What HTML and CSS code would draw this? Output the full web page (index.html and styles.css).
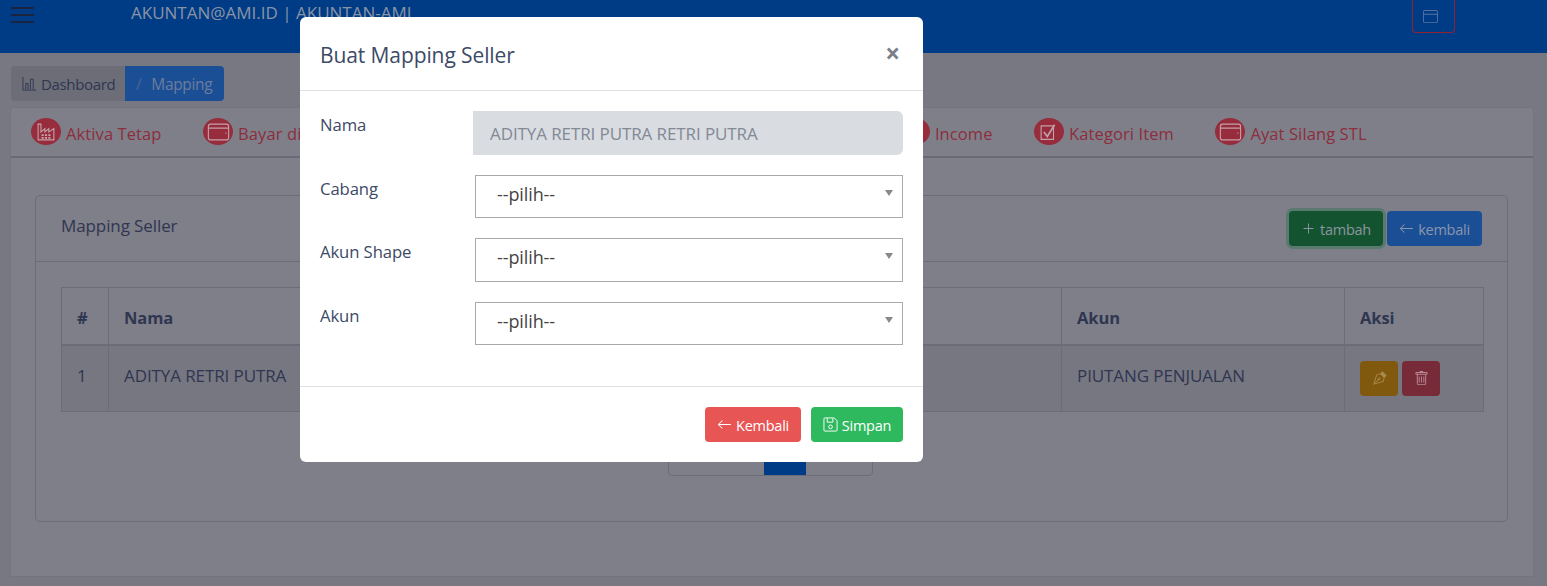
FILE: index.html
```html
<!DOCTYPE html>
<html lang="id">
  <head>
    <meta charset="UTF-8" />
    <title>Mapping Seller</title>
    <meta name="viewport" content="width=device-width, initial-scale=1.0" />
    <link rel="stylesheet" href="styles.css">
  </head>
  <body>
    <header class="topbar">
      <div class="burger"><span></span><span></span><span></span></div>
      <div class="account">AKUNTAN@AMI.ID | AKUNTAN-AMI</div>
      <button class="window-btn">
        <svg viewBox="0 0 16 16"><path fill-rule="evenodd" d="M2 1a2 2 0 0 0-2 2v10a2 2 0 0 0 2 2h12a2 2 0 0 0 2-2V3a2 2 0 0 0-2-2H2zm13 2v2H1V3a1 1 0 0 1 1-1h12a1 1 0 0 1 1 1zM2 14a1 1 0 0 1-1-1V6h14v7a1 1 0 0 1-1 1H2z"/></svg>
      </button>
    </header>

    <nav class="crumbs">
      <a class="crumb">
        <svg viewBox="0 0 16 16"><path d="M1 1v14h14M4 8h2.500v6M4 14V8M9 3.500h3V14M9 14V3.500" fill="none" stroke="currentColor"/></svg>
        Dashboard
      </a>
      <a class="crumb active"><i>/</i> Mapping</a>
    </nav>

    <main class="panel">
      <ul class="tabs">
        <li class="tab">
          <span class="tab-icon"><svg viewBox="0 0 16 16"><path d="M1 15V1h2.500v7L7 5v3l3.500-3v3L15 5v10z" fill="none" stroke="currentColor"/><path d="M4 10h2v1.500H4zm3 0h2v1.500H7zm3 0h2v1.500h-2zM4 12.500h2V14H4zm3 0h2V14H7zm3 0h2V14h-2z"/></svg></span>Aktiva Tetap
        </li>
        <li class="tab">
          <span class="tab-icon tab-icon-wide"><svg viewBox="0 0 20 16"><path d="M3 1h14a2 2 0 0 1 2 2v10a2 2 0 0 1-2 2H3a2 2 0 0 1-2-2V3a2 2 0 0 1 2-2zM1.500 4.500h17" fill="none" stroke="currentColor"/><path d="M16 8.500h1v1h-1z"/></svg></span>Bayar di
        </li>
        <li class="tab tab-income"><span class="tab-icon"></span>Income</li>
        <li class="tab">
          <span class="tab-icon"><svg viewBox="0 0 16 16"><path d="M1 2.500h11v12H1z" fill="none" stroke="currentColor"/><path d="M3.500 8 6.500 12 13 1.500" fill="none" stroke="currentColor" stroke-width="1.500"/></svg></span>Kategori Item
        </li>
        <li class="tab">
          <span class="tab-icon tab-icon-wide"><svg viewBox="0 0 20 16"><path d="M3 1h14a2 2 0 0 1 2 2v10a2 2 0 0 1-2 2H3a2 2 0 0 1-2-2V3a2 2 0 0 1 2-2zM1.500 4.500h17" fill="none" stroke="currentColor"/><path d="M16 8.500h1v1h-1z"/></svg></span>Ayat Silang STL
        </li>
      </ul>

      <section class="card">
        <div class="card-head">
          <span class="card-title">Mapping Seller</span>
          <div class="card-actions">
            <button class="btn btn-green">
              <svg viewBox="0 0 16 16"><path d="M8 2.500a.5.5 0 0 1 .5.500v4.500H13a.5.5 0 0 1 0 1H8.500V13a.5.5 0 0 1-1 0V8.500H3a.5.5 0 0 1 0-1h4.500V3a.5.5 0 0 1 .5-.5z"/></svg>
              tambah
            </button>
            <button class="btn btn-blue">
              <svg viewBox="0 0 16 16"><path d="M15 8a.5.5 0 0 0-.5-.5H2.700l3.150-3.150a.5.5 0 1 0-.7-.7l-4 4a.5.5 0 0 0 0 .7l4 4a.5.5 0 0 0 .7-.7L2.700 8.500H14.500A.5.5 0 0 0 15 8z"/></svg>
              kembali
            </button>
          </div>
        </div>
        <div class="card-body">
          <table class="grid">
            <thead>
              <tr>
                <th class="col-no">#</th>
                <th>Nama</th>
                <th class="col-akun">Akun</th>
                <th class="col-aksi">Aksi</th>
              </tr>
            </thead>
            <tbody>
              <tr>
                <td>1</td>
                <td>ADITYA RETRI PUTRA</td>
                <td>PIUTANG PENJUALAN</td>
                <td>
                  <div class="row-actions">
                    <button class="mini mini-yellow">
                      <svg viewBox="0 0 16 16"><path fill-rule="evenodd" d="M10.646.646a.5.5 0 0 1 .708 0l4 4a.5.5 0 0 1 0 .708l-1.902 1.902-.829 3.313a1.500 1.500 0 0 1-1.024 1.073L1.254 14.746 4.358 4.400A1.500 1.500 0 0 1 5.430 3.377l3.313-.828L10.646.646zm-1.800 2.908-3.173.793a.5.5 0 0 0-.358.342l-2.570 8.565 8.567-2.570a.5.5 0 0 0 .34-.357l.794-3.174-3.600-3.600z"/><path fill-rule="evenodd" d="M2.832 13.228 8 9a1 1 0 1 0-1-1l-4.228 5.168-.026.086.086-.026z"/></svg>
                    </button>
                    <button class="mini mini-red">
                      <svg viewBox="0 0 16 16"><path d="M5.500 5.500A.5.5 0 0 1 6 6v6a.5.5 0 0 1-1 0V6a.5.5 0 0 1 .5-.5zm2.500 0a.5.5 0 0 1 .5.500v6a.5.5 0 0 1-1 0V6a.5.5 0 0 1 .5-.5zm3 .5a.5.5 0 0 0-1 0v6a.5.5 0 0 0 1 0V6z"/><path fill-rule="evenodd" d="M14.500 3a1 1 0 0 1-1 1H13v9a2 2 0 0 1-2 2H5a2 2 0 0 1-2-2V4h-.5a1 1 0 0 1-1-1V2a1 1 0 0 1 1-1H6a1 1 0 0 1 1-1h2a1 1 0 0 1 1 1h3.500a1 1 0 0 1 1 1v1zM4.118 4 4 4.059V13a1 1 0 0 0 1 1h6a1 1 0 0 0 1-1V4.059L11.882 4H4.118zM2.500 3V2h11v1h-11z"/></svg>
                    </button>
                  </div>
                </td>
              </tr>
            </tbody>
          </table>
          <div class="pager">
            <span class="page page-first"></span>
            <span class="page current"></span>
            <span class="page"></span>
          </div>
        </div>
      </section>
    </main>

    <div class="modal">
      <div class="modal-head">
        <h5>Buat Mapping Seller</h5>
        <span class="close">&times;</span>
      </div>
      <form class="modal-body">
        <div class="field">
          <label>Nama</label>
          <input class="readonly" type="text" value="ADITYA RETRI PUTRA RETRI PUTRA" disabled />
        </div>
        <div class="field">
          <label>Cabang</label>
          <div class="select">--pilih--</div>
        </div>
        <div class="field">
          <label>Akun Shape</label>
          <div class="select">--pilih--</div>
        </div>
        <div class="field">
          <label>Akun</label>
          <div class="select">--pilih--</div>
        </div>
      </form>
      <div class="modal-foot">
        <button class="btn btn-danger">
          <svg viewBox="0 0 16 16"><path d="M15 8a.5.5 0 0 0-.5-.5H2.700l3.150-3.150a.5.5 0 1 0-.7-.7l-4 4a.5.5 0 0 0 0 .7l4 4a.5.5 0 0 0 .7-.7L2.700 8.500H14.500A.5.5 0 0 0 15 8z"/></svg>
          Kembali
        </button>
        <button class="btn btn-success">
          <svg viewBox="0 0 16 16"><path d="M2 1h10l3 3v10a1 1 0 0 1-1 1H2a1 1 0 0 1-1-1V2a1 1 0 0 1 1-1z" fill="none" stroke="currentColor"/><path d="M4.500 1.500v4h6v-4" fill="none" stroke="currentColor"/><circle cx="8" cy="10.500" r="2" fill="none" stroke="currentColor"/></svg>
          Simpan
        </button>
      </div>
    </div>
  </body>
</html>
```

FILE: styles.css
```css
* {
  box-sizing: border-box;
}

html,
body {
  height: 586px;
  overflow: hidden;
}

body {
  margin: 0;
  font-family: "Open Sans", "Noto Sans", sans-serif;
  font-size: 15px;
  letter-spacing: -0.1px;
  color: #2f3650;
  background-color: #787882;
}

svg {
  width: 1em;
  height: 1em;
  fill: currentColor;
  flex: none;
}

button {
  font-family: inherit;
  letter-spacing: inherit;
  border: none;
  cursor: pointer;
}

.topbar {
  display: flex;
  height: 53px;
  padding-left: 11px;
  background-color: #003c85;
}

.burger {
  display: flex;
  flex-direction: column;
  gap: 5px;
  width: 23px;
  margin-top: 7px;
}

.burger span {
  height: 2px;
  background-color: #182440;
}

.account {
  margin-left: 97px;
  font-size: 17px;
  letter-spacing: 0;
  line-height: 25px;
  color: #8a93a6;
}

.window-btn {
  display: flex;
  width: 43px;
  height: 33px;
  margin-left: auto;
  margin-right: 92px;
  padding: 9px 0 0 10px;
  font-size: 15px;
  color: #55709f;
  background: none;
  border: 1px solid #8f2430;
  border-top: none;
  border-radius: 0 0 4px 4px;
}

.crumbs {
  display: flex;
  width: 213px;
  height: 35px;
  margin: 13px 0 6px 11px;
  letter-spacing: -0.35px;
  border-radius: 4px;
  overflow: hidden;
}

.crumb {
  display: flex;
  align-items: center;
  gap: 4px;
  width: 114px;
  padding-left: 11px;
  background-color: #6d6d78;
  color: #2f3650;
}

.crumb svg {
  font-size: 15px;
}

.crumb.active {
  width: 99px;
  gap: 10px;
  font-size: 15.500px;
  background-color: #1a4f96;
  color: #6d7c9c;
}

.crumb.active i {
  font-style: normal;
  color: #4a6590;
}

.panel {
  width: 1524px;
  height: 470px;
  margin-left: 10px;
  background-color: #7f7f8a;
  border: 1px solid #74747f;
  border-radius: 4px 4px 0 0;
}

.tabs {
  display: flex;
  gap: 41.500px;
  height: 50px;
  margin: 0;
  padding: 10px 0 0 20px;
  list-style: none;
  border-bottom: 2px solid #6a6a76;
  font-size: 16.500px;
  letter-spacing: 0.1px;
  color: #8c2e3c;
}

.tab {
  display: flex;
  align-items: center;
  gap: 5px;
  height: 31px;
}

.tab-income {
  margin-left: 557px;
}

.tab-icon {
  display: flex;
  align-items: center;
  justify-content: center;
  align-self: flex-start;
  width: 30px;
  height: 27px;
  font-size: 18px;
  color: #c4a0a8;
  background-color: #962c3c;
  border-radius: 50%;
}

.tab-icon-wide svg {
  width: 23px;
  height: 18px;
}

.card {
  width: 1473px;
  height: 327px;
  margin: 37px 0 0 24px;
  border: 1px solid #6c6c78;
  border-radius: 5px;
}

.card-head {
  display: flex;
  justify-content: space-between;
  height: 66px;
  padding: 15px 25px 0 25px;
  border-bottom: 1px solid #6c6c78;
}

.card-title {
  font-size: 17px;
  line-height: 30px;
}

.card-actions {
  display: flex;
  gap: 4px;
  height: 35px;
}

.btn {
  display: flex;
  align-items: center;
  justify-content: center;
  gap: 4px;
  height: 35px;
  padding-top: 2px;
  font-size: 14.500px;
  letter-spacing: -0.25px;
  border-radius: 4px;
}

.btn svg {
  font-size: 15px;
  margin-top: -2px;
}

.btn-green {
  width: 94px;
  color: #8a96a0;
  background-color: #145330;
  box-shadow: 0 0 0 3px #5a7a70;
}

.btn-blue {
  width: 95px;
  color: #8a95ab;
  background-color: #1a4f96;
}

.card-body {
  padding: 25px 24px 0 25px;
}

.grid {
  width: 1423px;
  table-layout: fixed;
  border-collapse: collapse;
}

.grid th,
.grid td {
  padding: 0 15px;
  text-align: left;
  border: 1px solid #6c6c78;
}

.grid th {
  height: 57px;
  padding-top: 3px;
  font-size: 16.500px;
  font-weight: 700;
  border-bottom-width: 2px;
}

.grid td {
  height: 67px;
  padding-bottom: 6px;
  font-size: 17px;
  color: #2f3650;
  background-color: #777782;
}

.col-no {
  width: 47px;
}

.col-akun {
  width: 283px;
}

.col-aksi {
  width: 139px;
}

.row-actions {
  display: flex;
  gap: 4px;
  padding-top: 7px;
}

.mini {
  display: flex;
  align-items: center;
  justify-content: center;
  width: 38px;
  height: 35px;
  padding: 0;
  font-size: 15px;
  border-radius: 4px;
}

.mini-yellow {
  color: #a88a4a;
  background-color: #80590f;
}

.mini-red {
  color: #b98a95;
  background-color: #772a38;
}

.pager {
  display: flex;
  width: 205px;
  height: 64px;
  margin: 0 0 0 607px;
  border: 1px solid #6c6c78;
  border-radius: 0 0 4px 4px;
}

.page {
  flex: 1;
}

.page-first {
  flex: none;
  width: 95px;
}

.page.current {
  flex: none;
  width: 42px;
  background-color: #003c85;
}

.modal {
  position: fixed;
  top: 17px;
  left: 300px;
  width: 623px;
  height: 445px;
  color: #3c4a66;
  background-color: #fff;
  border-radius: 6px;
}

.modal-head {
  display: flex;
  justify-content: space-between;
  height: 74px;
  padding: 21px 23px 0 20px;
  border-bottom: 1px solid #dee2e6;
}

.modal-head h5 {
  margin: 0;
  font-size: 21px;
  font-weight: 400;
  line-height: 34px;
}

.close {
  font-size: 26px;
  font-weight: 700;
  line-height: 30px;
  color: #7a7f8a;
}

.modal-body {
  display: flex;
  flex-direction: column;
  height: 296px;
  padding: 20px 20px 0 20px;
  border-bottom: 1px solid #dee2e6;
}

.field {
  display: flex;
  align-items: flex-start;
  flex: none;
  height: 63.500px;
  font-size: 16.700px;
}

.field label {
  width: 155px;
  line-height: 28px;
}

.readonly {
  width: 430px;
  height: 44px;
  margin-left: -2px;
  padding: 0 17px;
  font-family: inherit;
  font-size: 17px;
  letter-spacing: inherit;
  color: #838995;
  background-color: #d9dce1;
  border: none;
  border-radius: 0 6px 6px 0;
}

.select {
  position: relative;
  width: 428px;
  height: 43.700px;
  padding-left: 21px;
  font-size: 18px;
  line-height: 37px;
  color: #444;
  border: 1px solid #aaa;
}

.select::after {
  content: "";
  position: absolute;
  top: 14px;
  right: 9px;
  border-top: 6px solid #888;
  border-left: 4.500px solid transparent;
  border-right: 4.500px solid transparent;
}

.modal-foot {
  display: flex;
  justify-content: flex-end;
  gap: 10px;
  padding: 20px 20px 0 0;
}

.btn-danger {
  width: 96px;
  color: #fff;
  background-color: #e85555;
}

.btn-success {
  width: 92px;
  color: #fff;
  background-color: #2fb95f;
}
```
